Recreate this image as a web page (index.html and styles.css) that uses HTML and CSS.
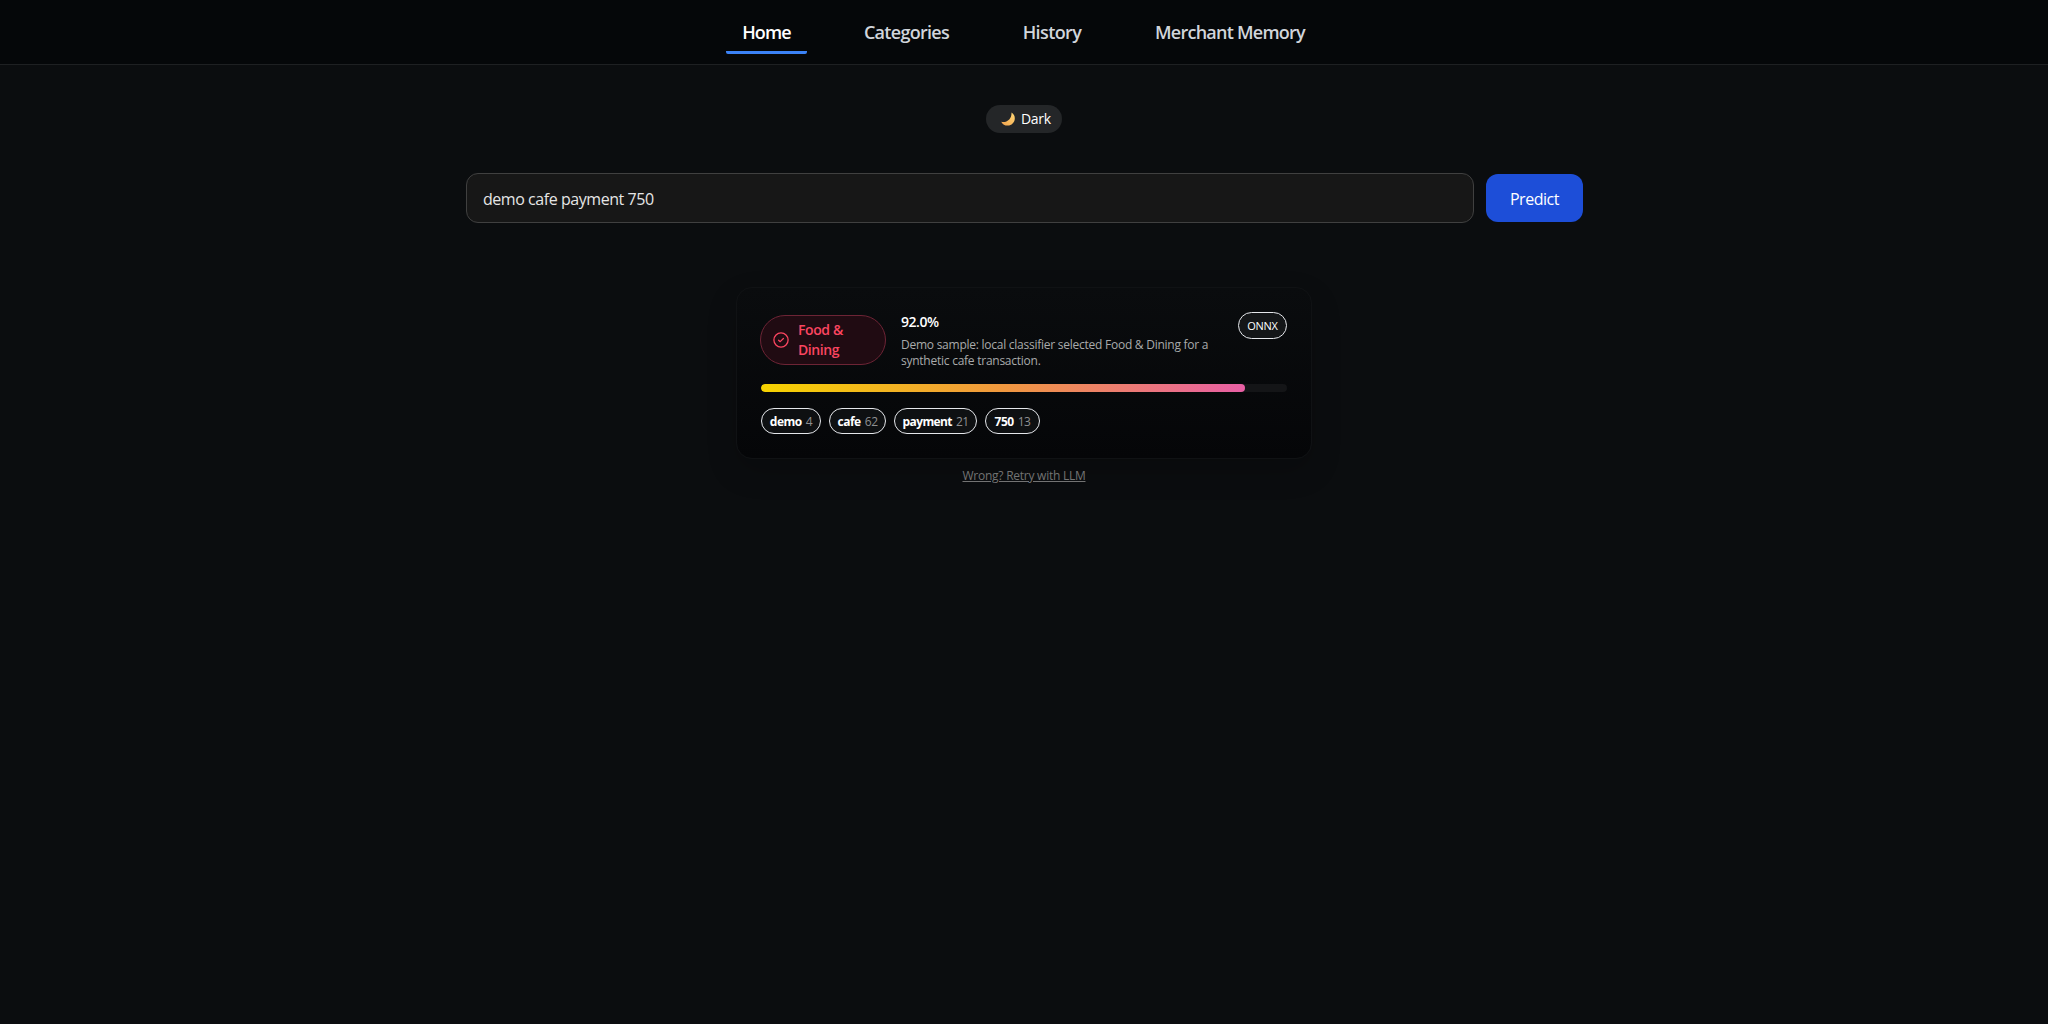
FILE: index.html
```html
<!DOCTYPE html>
<html lang="en">
<head>
  <meta charset="utf-8">
  <title>Transaction Classifier</title>
  <meta name="viewport" content="width=device-width, initial-scale=1">
  <link rel="stylesheet" href="styles.css">
</head>
<body>

  <nav class="navbar">
    <a class="nav-link nav-home active" href="#">Home</a>
    <a class="nav-link nav-categories" href="#">Categories</a>
    <a class="nav-link nav-history" href="#">History</a>
    <a class="nav-link nav-merchant" href="#">Merchant Memory</a>
  </nav>

  <main class="page">
    <button class="theme-toggle" type="button">
      <svg class="moon" viewBox="0 0 14 14">
        <defs>
          <linearGradient id="moonFill" x1="0" y1="1" x2="1" y2="0">
            <stop offset="0" stop-color="#f0a04b"/>
            <stop offset="1" stop-color="#ffd977"/>
          </linearGradient>
        </defs>
        <path fill="url(#moonFill)" d="M10.5.5C12.800 1.900 14 4.100 13.800 6.700 13.500 10.500 10.600 13.400 6.800 13.600 4 13.700 1.600 12.300.2 9.700c1.500.5 3.500.5 5.200-.3C8.700 8 10.700 5 10.500.5z"/>
      </svg>
      <span>Dark</span>
    </button>

    <form class="predict-form">
      <input class="predict-input" type="text" value="demo cafe payment 750">
      <button class="predict-button" type="button">Predict</button>
    </form>

    <section class="result-card">
      <div class="result-head">
        <div class="category-badge">
          <svg class="check-icon" viewBox="0 0 16 16" fill="none" stroke="currentColor" stroke-linecap="round" stroke-linejoin="round">
            <circle cx="8" cy="8" r="7.100" stroke-width="1.300"/>
            <path d="M5.600 8.200l1.600 1.500 3.200-3.200" stroke-width="1.200"/>
          </svg>
          <span class="category-name">Food &amp;<br>Dining</span>
        </div>
        <div class="result-info">
          <div class="confidence">92.0%</div>
          <p class="explanation">Demo sample: local classifier selected Food &amp; Dining for a<br>synthetic cafe transaction.</p>
        </div>
        <span class="source">ONNX</span>
      </div>

      <div class="progress">
        <div class="progress-fill" style="width: 92%"></div>
      </div>

      <div class="tokens">
        <span class="token token-demo"><b>demo</b><i>4</i></span>
        <span class="token token-cafe"><b>cafe</b><i>62</i></span>
        <span class="token token-payment"><b>payment</b><i>21</i></span>
        <span class="token token-amount"><b>750</b><i>13</i></span>
      </div>
    </section>

    <a class="retry" href="#">Wrong? Retry with LLM</a>
  </main>

</body>
</html>
```
FILE: styles.css
```css
* {
  box-sizing: border-box;
}
body {
  margin: 0;
  min-height: 100vh;
  background: #0b0d0f;
  color: #fff;
  font-family: "Segoe UI", "Open Sans", "Noto Sans", sans-serif;
}
button,
input {
  font-family: inherit;
}

/* navigation */
.navbar {
  height: 65px;
  display: flex;
  justify-content: center;
  gap: 40px;
  padding-top: 11px;
  background: #050709;
  border-bottom: 1px solid #1e2022;
}
.nav-link {
  height: 43px;
  border-bottom: 3px solid transparent;
  border-radius: 2px;
  font-size: 18px;
  font-weight: 650;
  line-height: 42px;
  text-align: center;
  text-decoration: none;
  white-space: nowrap;
  color: #d1d5db;
}
.nav-link.active {
  color: #fff;
  background: linear-gradient(#3b82f6, #3b82f6) 0 100% / 100% 3px no-repeat border-box;
}
.nav-home {
  width: 81px;
  letter-spacing: -0.85px;
}
.nav-categories {
  width: 119px;
  letter-spacing: -0.7px;
}
.nav-history {
  width: 92px;
  letter-spacing: -0.6px;
}
.nav-merchant {
  width: 184px;
  letter-spacing: -0.75px;
}

/* page */
.page {
  display: flex;
  flex-direction: column;
  align-items: center;
  padding-top: 40px;
}
.theme-toggle {
  width: 76px;
  height: 28px;
  display: flex;
  align-items: center;
  gap: 6px;
  padding: 0 0 1px 15px;
  border: 0;
  border-radius: 14px;
  background: #242628;
  color: #fff;
  font-size: 14px;
  letter-spacing: -0.3px;
}
.moon {
  width: 14px;
  height: 14px;
  margin-top: 1px;
}
.predict-form {
  width: 1117px;
  display: flex;
  align-items: center;
  gap: 12px;
  margin: 40px 0 64px 1px;
}
.predict-input {
  flex: 1;
  height: 50px;
  padding: 1px 16px 0;
  border: 1px solid #404040;
  border-radius: 12px;
  outline: none;
  background: #171717;
  color: #e5e5e5;
  font-size: 16px;
  letter-spacing: -0.45px;
}
.predict-button {
  width: 97px;
  height: 48px;
  padding-top: 2px;
  border: 0;
  border-radius: 12px;
  background: #1d4ed8;
  color: #fff;
  font-size: 16px;
  letter-spacing: -0.45px;
}

/* result */
.result-card {
  width: 576px;
  height: 172px;
  padding: 24px;
  border: 1px solid #101214;
  border-radius: 16px;
  background: linear-gradient(#0a0c0e, #050608);
  box-shadow: 0 12px 30px rgba(0, 0, 0, 0.18);
}
.result-head {
  display: flex;
  align-items: flex-start;
}
.category-badge {
  width: 126px;
  height: 50px;
  display: flex;
  align-items: center;
  gap: 9px;
  margin: 3px 15px 0 -1px;
  padding-left: 12px;
  border: 1px solid #6d2435;
  border-radius: 25px;
  background: #200b12;
  color: #fb4560;
}
.check-icon {
  width: 16px;
  height: 16px;
}
.category-name {
  font-size: 14px;
  font-weight: 650;
  line-height: 20px;
  letter-spacing: -0.4px;
}
.result-info {
  width: 337px;
}
.confidence {
  font-size: 14px;
  font-weight: 650;
  line-height: 20px;
  letter-spacing: -0.45px;
}
.explanation {
  margin: 5px 0 0;
  color: #a9aaab;
  font-size: 12px;
  line-height: 16px;
  letter-spacing: -0.25px;
  white-space: nowrap;
}
.source {
  width: 49px;
  height: 27px;
  border: 1px solid #e5e7eb;
  border-radius: 14px;
  background: #141618;
  font-size: 11px;
  font-weight: 500;
  line-height: 25px;
  text-align: center;
  letter-spacing: -0.3px;
}
.progress {
  height: 8px;
  margin-top: 15px;
  border-radius: 4px;
  overflow: hidden;
  background: #141517;
}
.progress-fill {
  height: 100%;
  border-radius: 4px;
  background: linear-gradient(90deg, #f6d300, #f0983f 50%, #e85fa5);
}
.tokens {
  display: flex;
  gap: 8px;
  margin-top: 16px;
}
.token {
  height: 26px;
  display: flex;
  justify-content: center;
  gap: 4px;
  border: 1px solid #e5e7eb;
  border-radius: 13px;
  background: #0e1012;
  font-size: 12px;
  line-height: 25px;
  letter-spacing: -0.45px;
}
.token b {
  font-weight: 700;
}
.token i {
  font-style: normal;
  color: #8e8f91;
}
.token-demo {
  width: 60px;
}
.token-cafe {
  width: 57px;
}
.token-payment {
  width: 83px;
  letter-spacing: -0.6px;
}
.token-amount {
  width: 55px;
}
.retry {
  margin-top: 9px;
  color: #737373;
  font-size: 12px;
  line-height: 16px;
  letter-spacing: -0.25px;
}
```
